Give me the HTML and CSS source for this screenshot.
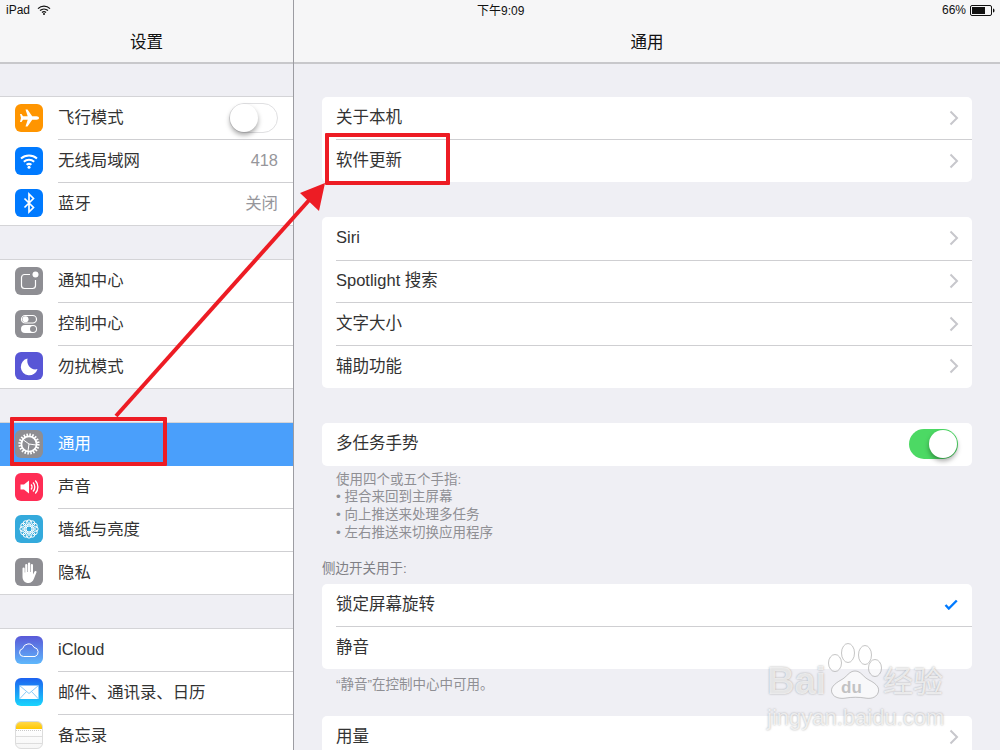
FILE: index.html
```html
<!DOCTYPE html>
<html lang="zh-CN">
<head>
<meta charset="utf-8">
<title>设置 - 通用</title>
<link rel="stylesheet" href="styles.css">
</head>
<body>
<div class="ipad">
  <aside class="side">
    <header class="bar">
      <div class="status"><span class="carrier">iPad</span>
        <svg class="wifi-s" viewBox="0 0 14 10" width="14" height="10"><path d="M1 3.600C4.400.4 9.600.4 13 3.600M3 5.600c2.300-2 5.700-2 8 0M5 7.500c1.200-1 2.800-1 4 0" fill="none" stroke="#111" stroke-width="1.300"/><circle cx="7" cy="9" r="1" fill="#111"/></svg>
      </div>
      <h1 class="title">设置</h1>
    </header>
    <div class="side-scroll">
      <ul class="sgroup">
        <li class="srow"><span class="icon orange"><svg viewBox="0 0 28 28"><path d="M24 14c0-1-1-1.700-2.500-1.700h-4.300L12.500 5.500h-2l2.200 6.800H8L6.500 10H5l1 4-1 4h1.500L8 15.700h4.700L10.500 22.500h2l4.700-6.800h4.300C23 15.700 24 15 24 14z" fill="#fff"/></svg></span><span class="lbl">飞行模式</span><span class="toggle off"><i></i></span></li>
        <li class="srow"><span class="icon blue"><svg viewBox="0 0 28 28"><path d="M6 11.500c4.600-4 11.400-4 16 0M8.800 14.800c3-2.600 7.400-2.600 10.400 0M11.600 17.800c1.400-1.100 3.400-1.100 4.800 0" fill="none" stroke="#fff" stroke-width="2"/><circle cx="14" cy="20.300" r="1.500" fill="#fff"/></svg></span><span class="lbl">无线局域网</span><span class="val val-num">418</span></li>
        <li class="srow"><span class="icon blue"><svg viewBox="0 0 28 28"><path d="M9.500 9.500l9 9-4.500 4.500V5l4.500 4.500-9 9" fill="none" stroke="#fff" stroke-width="1.700"/></svg></span><span class="lbl">蓝牙</span><span class="val">关闭</span></li>
      </ul>
      <ul class="sgroup">
        <li class="srow"><span class="icon gray"><svg viewBox="0 0 28 28"><path d="M15 7.500H9.500a3 3 0 0 0-3 3v8a3 3 0 0 0 3 3h8a3 3 0 0 0 3-3V13" fill="none" stroke="#fff" stroke-width="1.200"/><circle cx="20.500" cy="7.500" r="3" fill="#fff"/></svg></span><span class="lbl">通知中心</span></li>
        <li class="srow"><span class="icon gray"><svg viewBox="0 0 28 28"><rect x="6.500" y="5.500" width="15" height="7.500" rx="3.750" fill="none" stroke="#fff" stroke-width="1.200"/><circle cx="10.500" cy="9.250" r="3" fill="#fff"/><rect x="6" y="15" width="16" height="8" rx="4" fill="#fff"/><circle cx="18" cy="19" r="3" fill="#8e8e93"/></svg></span><span class="lbl">控制中心</span></li>
        <li class="srow"><span class="icon indigo"><svg viewBox="0 0 28 28"><path d="M12.500 6.500a8.500 8.500 0 1 0 10 10.500c-5.500 2-11.500-3.500-10-10.500z" fill="#fff"/></svg></span><span class="lbl">勿扰模式</span></li>
      </ul>
      <ul class="sgroup">
        <li class="srow selected"><span class="icon gray"><svg viewBox="0 0 28 28"><circle cx="14" cy="14" r="9" fill="none" stroke="#fff" stroke-width="3.200" stroke-dasharray="1.500 1.330"/><circle cx="14" cy="14" r="7.600" fill="none" stroke="#fff" stroke-width="1.800"/><path d="M14 14L21 15M14 14L8.500 10M14 14L13 21" stroke="#fff" stroke-width="1" fill="none"/></svg></span><span class="lbl">通用</span></li>
        <li class="srow"><span class="icon rose"><svg viewBox="0 0 28 28"><path d="M5.500 11.500h3.500L14 7.500v13l-5-4H5.500z" fill="#fff"/><path d="M16 11.500a3.500 3.500 0 0 1 0 5M18 9.500a6.500 6.500 0 0 1 0 9M20.300 7.500a9.500 9.500 0 0 1 0 13" fill="none" stroke="#fff" stroke-width="1.300"/></svg></span><span class="lbl">声音</span></li>
        <li class="srow"><span class="icon cyan"><svg viewBox="0 0 28 28"><g fill="none" stroke="#fff" stroke-width="1"><circle cx="14" cy="14" r="3"/><circle cx="14" cy="7.500" r="2.600"/><circle cx="17.250" cy="8.370" r="2.600"/><circle cx="19.630" cy="10.750" r="2.600"/><circle cx="20.500" cy="14" r="2.600"/><circle cx="19.630" cy="17.250" r="2.600"/><circle cx="17.250" cy="19.630" r="2.600"/><circle cx="14" cy="20.500" r="2.600"/><circle cx="10.750" cy="19.630" r="2.600"/><circle cx="8.370" cy="17.250" r="2.600"/><circle cx="7.500" cy="14" r="2.600"/><circle cx="8.370" cy="10.750" r="2.600"/><circle cx="10.750" cy="8.370" r="2.600"/></g></svg></span><span class="lbl">墙纸与亮度</span></li>
        <li class="srow"><span class="icon gray"><svg viewBox="0 0 28 28"><path d="M7.500 10.500a1.100 1.100 0 0 1 2.200 0v4h.500V7a1.100 1.100 0 0 1 2.200 0v7h.600V5.500a1.100 1.100 0 0 1 2.200 0v8.500h.600V7a1.100 1.100 0 0 1 2.200 0v9.500l1.500-3c.600-1.100 2.500-.5 2 .8l-2.600 6.500c-.9 2.400-2.800 4.200-5.500 4.200-3.600 0-5.900-2.600-5.900-6.300z" fill="#fff"/></svg></span><span class="lbl">隐私</span></li>
      </ul>
      <ul class="sgroup">
        <li class="srow"><span class="icon cloud"><svg viewBox="0 0 28 28"><path d="M8.500 20.500a4 4 0 0 1-.8-7.900 6 6 0 0 1 11.300-1.200 4.700 4.700 0 0 1 1 9.100z" fill="none" stroke="#fff" stroke-width="1"/></svg></span><span class="lbl lbl-latin">iCloud</span></li>
        <li class="srow"><span class="icon mail"><svg viewBox="0 0 28 28"><rect x="4.500" y="7.500" width="19" height="13.500" fill="#fff"/><path d="M4.500 7.500L14 15.500l9.500-8M4.500 21l7-7.500M23.500 21l-7-7.500" fill="none" stroke="#7cc4f7" stroke-width=".9"/></svg></span><span class="lbl">邮件、通讯录、日历</span></li>
        <li class="srow"><span class="icon notes"><svg viewBox="0 0 28 28"><path d="M0 8.500h28" stroke="#bbb" stroke-width=".8" stroke-dasharray="1 1"/><path d="M0 14.500h28M0 21.500h28" stroke="#d5d5d5" stroke-width=".8"/></svg></span><span class="lbl">备忘录</span></li>
      </ul>
    </div>
  </aside>
  <main class="main">
    <header class="bar">
      <div class="status main-status"><span class="s-left"></span><span class="clock">下午9:09</span>
        <span class="s-right">66%<svg class="battery" viewBox="0 0 26 11" width="26" height="11"><rect x=".5" y=".5" width="21" height="10" rx="1.500" fill="none" stroke="#111"/><rect x="2" y="2" width="13" height="7" fill="#111"/><path d="M23 3.500c1 0 1.500 1 1.500 2s-.5 2-1.500 2z" fill="#111"/></svg></span>
      </div>
      <h1 class="title">通用</h1>
    </header>
    <div class="main-scroll">
      <ul class="card">
        <li class="crow"><span class="lbl">关于本机</span><svg class="chev" viewBox="0 0 10 16"><path d="M1.500 1.500L8 8l-6.500 6.500" /></svg></li>
        <li class="crow"><span class="lbl">软件更新</span><svg class="chev" viewBox="0 0 10 16"><path d="M1.500 1.500L8 8l-6.500 6.500" /></svg></li>
      </ul>
      <ul class="card">
        <li class="crow"><span class="lbl lbl-latin">Siri</span><svg class="chev" viewBox="0 0 10 16"><path d="M1.500 1.500L8 8l-6.500 6.500" /></svg></li>
        <li class="crow"><span class="lbl">Spotlight 搜索</span><svg class="chev" viewBox="0 0 10 16"><path d="M1.500 1.500L8 8l-6.500 6.500" /></svg></li>
        <li class="crow"><span class="lbl">文字大小</span><svg class="chev" viewBox="0 0 10 16"><path d="M1.500 1.500L8 8l-6.500 6.500" /></svg></li>
        <li class="crow"><span class="lbl">辅助功能</span><svg class="chev" viewBox="0 0 10 16"><path d="M1.500 1.500L8 8l-6.500 6.500" /></svg></li>
      </ul>
      <ul class="card card-tight">
        <li class="crow"><span class="lbl">多任务手势</span><span class="toggle on"><i></i></span></li>
      </ul>
      <p class="note note-gesture">使用四个或五个手指:<br>• 捏合来回到主屏幕<br>• 向上推送来处理多任务<br>• 左右推送来切换应用程序</p>
      <p class="section-head">侧边开关用于:</p>
      <ul class="card card-tight">
        <li class="crow"><span class="lbl">锁定屏幕旋转</span><svg class="check" viewBox="0 0 14 11"><path d="M1.500 6l3.300 3.500L12.800 1.500" /></svg></li>
        <li class="crow"><span class="lbl">静音</span></li>
      </ul>
      <p class="note note-mute">“静音”在控制中心中可用。</p>
      <ul class="card">
        <li class="crow"><span class="lbl">用量</span><svg class="chev" viewBox="0 0 10 16"><path d="M1.500 1.500L8 8l-6.500 6.500" /></svg></li>
      </ul>
    </div>
  </main>
  <div class="mark mark-general"></div>
  <div class="mark mark-update"></div>
  <svg class="arrow" viewBox="0 0 1000 750" width="1000" height="750"><path d="M116 416L311 198" stroke="#ed1c24" stroke-width="4" fill="none"/><path d="M325 183L319 211 300 193z" fill="#ed1c24"/></svg>
  <div class="watermark">
    <div class="wm-top">
      <span class="wm-bai">Bai</span>
      <span class="wm-paw"><svg viewBox="0 0 54 57" width="54" height="57"><g fill="rgba(255,255,255,.55)" stroke="rgba(140,140,140,.5)" stroke-width="1"><ellipse cx="7" cy="20" rx="6.500" ry="8.500"/><ellipse cx="20" cy="10" rx="6.500" ry="9.500"/><ellipse cx="37" cy="12" rx="6.500" ry="9.500"/><ellipse cx="47" cy="25" rx="6.500" ry="8.500"/><path d="M27 28c6 0 8 6 14 9 8 4 11 8 9 13-2 5-8 6-13 5-6-1-13-1-19 0-5 1-12 0-14-5-2-5 2-9 9-13 6-3 8-9 14-9z"/></g></svg><span class="wm-du">du</span></span>
      <span class="wm-cn">经验</span>
    </div>
    <span class="wm-sub">jingyan.baidu.com</span>
  </div>
</div>
</body>
</html>
```
FILE: styles.css
```css
* { box-sizing: border-box; }
html, body { margin: 0; padding: 0; }
body { width: 1000px; height: 750px; overflow: hidden; background: #efeff4; font-family: "Liberation Sans", "Noto Sans CJK SC", sans-serif; color: #222; }
ul { list-style: none; margin: 0; padding: 0; }
p, h1 { margin: 0; font-weight: normal; }
.ipad { position: relative; display: flex; width: 1000px; height: 750px; overflow: hidden; }
.side { width: 294px; height: 750px; border-right: 1px solid #9c9ca2; flex: none; overflow: hidden; }
.main { flex: 1; min-width: 0; height: 750px; overflow: hidden; }
.bar { height: 64px; background: #f6f6f7; border-bottom: 2px solid #c8c8cb; }
.status { height: 20px; display: flex; align-items: center; font-size: 12px; color: #111; }
.carrier { margin-left: 6px; }
.wifi-s { margin-left: 7px; }
.main-status { display: grid; grid-template-columns: 183px auto 1fr; padding-right: 4px; }
.clock { padding-bottom: 2px; }
.s-right { justify-self: end; display: flex; align-items: center; gap: 4px; }
.battery { flex: none; }
.title { font-size: 16.500px; line-height: 44px; height: 42px; text-align: center; color: #111; }
.side-scroll { padding-top: 33px; }
.sgroup { background: #fff; margin-bottom: 35px; box-shadow: 0 -1px 0 #d4d4d7, 0 1px 0 #d4d4d7; }
.srow { height: 42.700px; display: flex; align-items: center; font-size: 16.400px; padding: 0 15px 1px; position: relative; color: #333; }
.srow + .srow::before { content: ""; position: absolute; left: 58px; right: 0; top: -.5px; border-top: 1px solid #cfcfd2; }
.srow .lbl { margin-left: 15px; flex: 1; padding-bottom: 3px; }
.srow.selected { background: #4a9ffb; color: #fff; }
.srow.selected + .srow::before { display: none; }
.icon { width: 28px; height: 28px; border-radius: 6px; flex: none; display: block; overflow: hidden; }
.icon svg { width: 28px; height: 28px; display: block; }
.orange { background: #ff9500; }
.blue { background: #007aff; }
.gray { background: #8e8e93; }
.indigo { background: #5856d6; }
.rose { background: #ff2d55; }
.cyan { background: #34aadc; }
.cloud { background: linear-gradient(#5a59d8, #5fb8fc); }
.mail { background: linear-gradient(#1d62f0, #19d5fd); }
.notes { background: linear-gradient(#ffd84a 0, #ffc800 7px, #fff 7px, #f6f6f6 100%); border: 1px solid #dcdcdc; }
.val { color: #96969b; padding-bottom: 3px; }
.val-num { padding-bottom: 0; }
.toggle { width: 49px; height: 30px; border-radius: 15px; position: relative; flex: none; }
.toggle i { position: absolute; top: 1px; width: 28px; height: 28px; border-radius: 50%; background: #fff; box-shadow: 0 3px 5px rgba(0,0,0,.35); }
.toggle.off { border: 1px solid #e0e0e2; background: #fff; }
.toggle.off i { left: 0; top: 0; }
.toggle.on { background: #4cd964; }
.toggle.on i { right: 1px; }
.main-scroll { padding: 33px 28px 0; }
.card { background: #fff; border-radius: 5px; margin-bottom: 35px; overflow: hidden; }
.card-tight { margin-bottom: 0; }
.crow { height: 42.700px; display: flex; align-items: center; justify-content: space-between; font-size: 16.500px; padding: 0 14px 1px; position: relative; color: #333; }
.crow + .crow::before { content: ""; position: absolute; left: 14px; right: 0; top: -.5px; border-top: 1px solid #cfcfd2; }
.crow .lbl { padding-bottom: 3px; }
.srow .lbl-latin, .crow .lbl-latin { padding-bottom: 1px; }
.chev { width: 10px; height: 16px; margin-right: -1px; }
.chev path { fill: none; stroke: #c7c7cc; stroke-width: 2; }
.check { width: 14px; height: 11px; }
.check path { fill: none; stroke: #007aff; stroke-width: 2.400; }
.note { font-size: 13.500px; line-height: 17.600px; color: #8f8f94; padding-left: 14px; }
.note-gesture { margin-top: 5px; }
.section-head { font-size: 13.500px; line-height: 17.600px; color: #808085; margin-top: 19px; margin-bottom: 6px; }
.note-mute { margin-top: 7px; margin-bottom: 22px; }
.mark { position: absolute; border: 4px solid #ed1c24; border-radius: 1px; }
.mark-general { left: 10px; top: 417px; width: 157px; height: 49px; }
.mark-update { left: 325px; top: 133px; width: 125px; height: 52px; }
.arrow { position: absolute; left: 0; top: 0; pointer-events: none; }
.watermark { position: absolute; left: 767px; top: 643px; width: 182px; display: flex; flex-direction: column; color: rgba(255,255,255,.72); text-shadow: 0 0 2px rgba(110,110,110,.6); }
.wm-top { display: flex; align-items: flex-end; height: 57px; }
.wm-bai { font-size: 38px; line-height: 38px; font-weight: bold; width: 61px; }
.wm-paw { position: relative; width: 54px; height: 57px; flex: none; }
.wm-paw svg { display: block; }
.wm-du { position: absolute; left: 13px; top: 36px; font-size: 17px; line-height: 18px; font-weight: bold; color: rgba(170,170,170,.7); text-shadow: none; }
.wm-cn { font-size: 30px; line-height: 36px; margin-left: 1px; white-space: nowrap; }
.wm-sub { font-size: 22px; line-height: 26px; margin-top: 5px; white-space: nowrap; }
```
